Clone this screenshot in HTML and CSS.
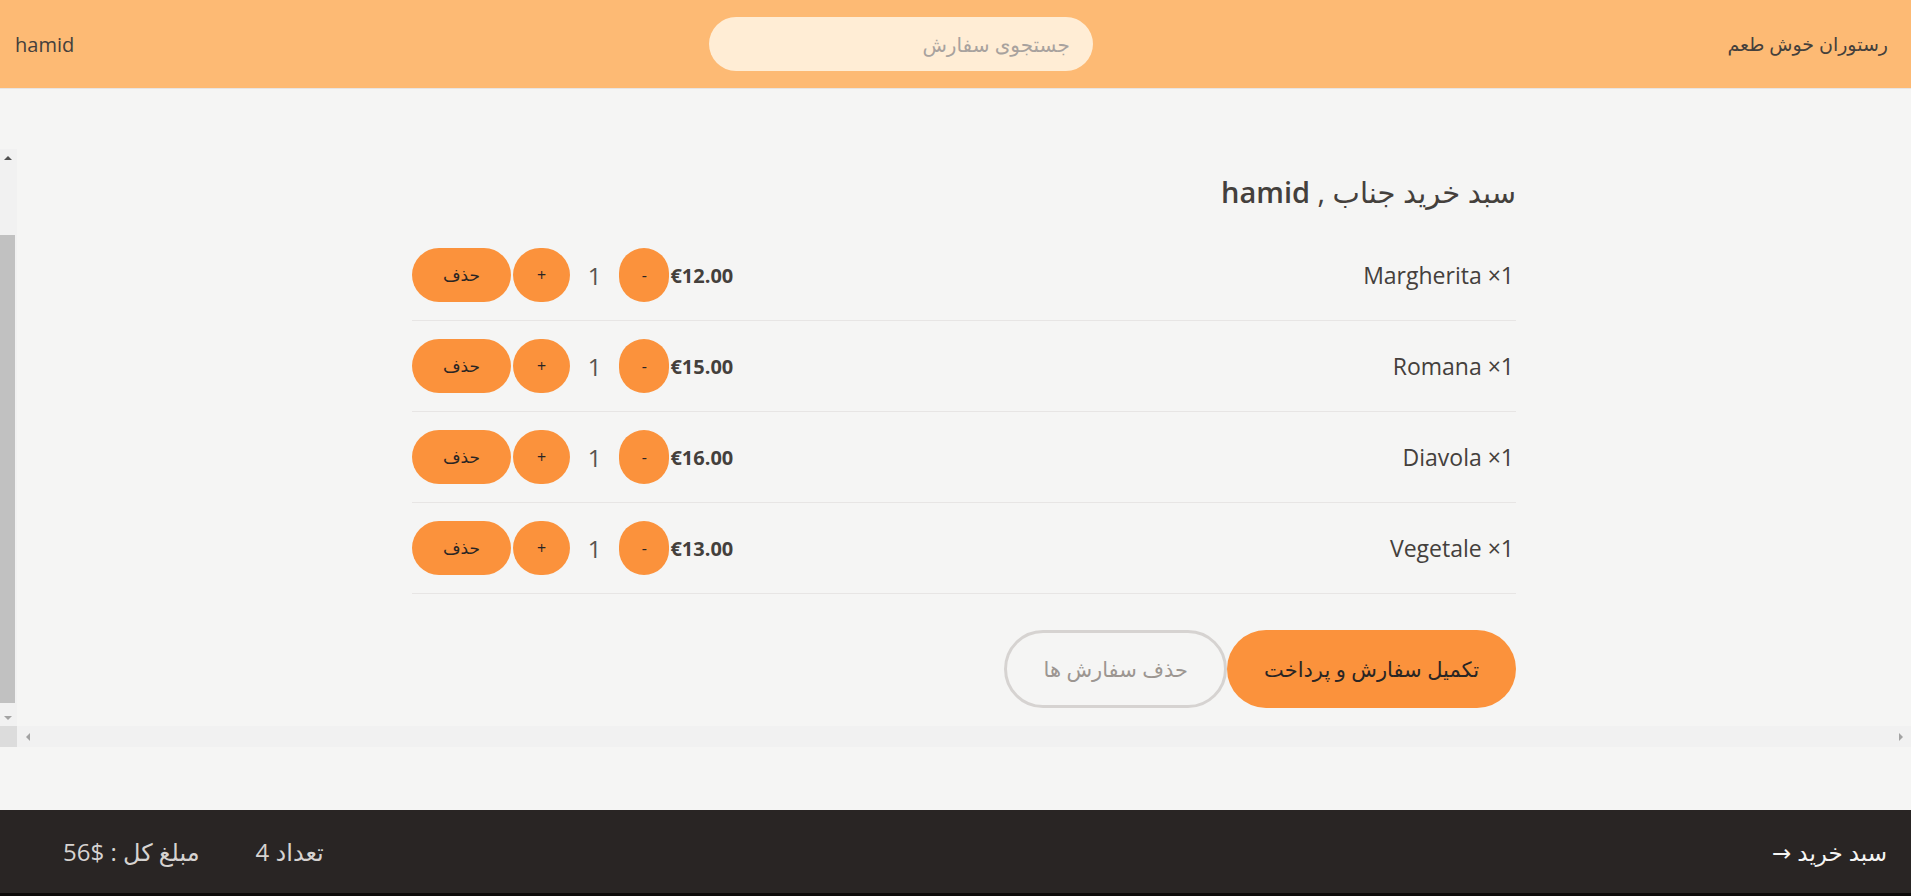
FILE: index.html
```html
<!DOCTYPE html>
<html lang="fa" dir="rtl">
<head>
<meta charset="utf-8">
<title>سبد خرید</title>
<link rel="stylesheet" href="styles.css">
</head>
<body>
<header class="topbar">
  <div class="brand">رستوران خوش طعم</div>
  <input class="search" type="text" placeholder="جستجوی سفارش">
  <div class="user">hamid</div>
</header>

<main class="page">
  <div class="cart-frame">
    <div class="cart-view">
      <section class="cart">
        <h1 class="cart-title">سبد خرید جناب , <span class="title-name">hamid</span></h1>

        <div class="item">
          <div class="item-name">Margherita ×1</div>
          <div class="item-controls">
            <span class="price">€12.00</span>
            <button class="pill step minus">-</button>
            <span class="qty">1</span>
            <button class="pill step plus">+</button>
            <button class="pill remove">حذف</button>
          </div>
        </div>

        <div class="item">
          <div class="item-name">Romana ×1</div>
          <div class="item-controls">
            <span class="price">€15.00</span>
            <button class="pill step minus">-</button>
            <span class="qty">1</span>
            <button class="pill step plus">+</button>
            <button class="pill remove">حذف</button>
          </div>
        </div>

        <div class="item">
          <div class="item-name">Diavola ×1</div>
          <div class="item-controls">
            <span class="price">€16.00</span>
            <button class="pill step minus">-</button>
            <span class="qty">1</span>
            <button class="pill step plus">+</button>
            <button class="pill remove">حذف</button>
          </div>
        </div>

        <div class="item">
          <div class="item-name">Vegetale ×1</div>
          <div class="item-controls">
            <span class="price">€13.00</span>
            <button class="pill step minus">-</button>
            <span class="qty">1</span>
            <button class="pill step plus">+</button>
            <button class="pill remove">حذف</button>
          </div>
        </div>

        <div class="actions">
          <button class="big-btn checkout">تکمیل سفارش و پرداخت</button>
          <button class="big-btn clear">حذف سفارش ها</button>
        </div>
      </section>
    </div>

    <div class="vbar">
      <div class="sb-btn"><span class="arrow up"></span></div>
      <div class="vtrack"><div class="vthumb"></div></div>
      <div class="sb-btn"><span class="arrow down"></span></div>
    </div>

    <div class="hbar">
      <div class="sb-btn hbtn"><span class="arrow left"></span></div>
      <div class="htrack"></div>
      <div class="sb-btn hbtn"><span class="arrow right"></span></div>
    </div>

    <div class="corner"></div>
  </div>
</main>

<footer class="bottombar">
  <div class="cart-link">سبد خرید →</div>
  <div class="stats">
    <span class="stat">تعداد 4</span>
    <span class="stat">مبلغ کل : $56</span>
  </div>
</footer>
</body>
</html>
```

FILE: styles.css
```css
* {
  box-sizing: border-box;
}

html, body {
  margin: 0;
  padding: 0;
}

body {
  height: 100vh;
  display: flex;
  flex-direction: column;
  direction: rtl;
  font-family: "Open Sans", "DejaVu Sans", sans-serif;
  background: #f5f5f4;
  color: #44403c;
  overflow: hidden;
}

/* ---------- header ---------- */
.topbar {
  height: 89px;
  flex-shrink: 0;
  background: #fdba74;
  border-bottom: 1px solid #e7e5e4;
  display: flex;
  align-items: center;
  justify-content: space-between;
  padding: 0 23px 0 15px;
}

.brand {
  font-size: 19px;
  color: #44403c;
}

.search {
  width: 384px;
  height: 54px;
  border: none;
  outline: none;
  border-radius: 9999px;
  background: #ffedd5;
  padding: 0 23px;
  font-family: "Open Sans", "DejaVu Sans", sans-serif;
  font-size: 20px;
  color: #44403c;
  direction: rtl;
}

.search::placeholder {
  color: #a8a29e;
}

.user {
  font-size: 20px;
  font-weight: 500;
  color: #44403c;
}

/* ---------- main ---------- */
.page {
  flex: 1;
  padding-top: 60px;
}

.cart-frame {
  display: grid;
  grid-template-columns: 1fr 17px;
  grid-template-rows: 577px 21px;
}

.cart-view {
  overflow: hidden;
}

.cart {
  width: 100%;
  max-width: 1152px;
  margin: 0 auto;
  padding: 22px 24px 18px;
}

.cart-title {
  margin: 0 0 17px;
  font-size: 29px;
  font-weight: 500;
  line-height: 42px;
  color: #44403c;
}

.title-name {
  font-weight: 600;
}

.item {
  display: flex;
  align-items: center;
  justify-content: space-between;
  padding: 18px 0;
  border-bottom: 1px solid #e7e5e4;
}

.item-name {
  font-size: 23px;
  color: #44403c;
  padding-right: 2px;
}

.item-controls {
  display: flex;
  align-items: center;
}

.price {
  font-size: 20px;
  font-weight: 700;
  color: #44403c;
  margin-left: 1px;
}

.pill {
  height: 54px;
  border: none;
  border-radius: 9999px;
  background: #fb923c;
  color: #292524;
  font-family: "Open Sans", "DejaVu Sans", sans-serif;
  font-size: 16px;
  line-height: 24px;
  padding: 0;
}

.step.minus {
  padding: 0 22.5px;
}

.step.plus {
  padding: 0 24px;
}

.qty {
  width: 49px;
  text-align: center;
  font-size: 24px;
  color: #57534e;
}

.remove {
  font-size: 17px;
  padding: 0 31px;
  margin-right: 2px;
}

.actions {
  display: flex;
  margin-top: 36px;
}

.big-btn {
  height: 78px;
  border-radius: 9999px;
  font-family: "Open Sans", "DejaVu Sans", sans-serif;
  font-size: 21px;
}

.checkout {
  background: #fb923c;
  border: none;
  color: #292524;
  padding: 0 37px;
}

.clear {
  background: transparent;
  border: 3px solid #d6d3d1;
  color: #9c9691;
  padding: 0 36px;
}

/* ---------- scrollbars (drawn) ---------- */
.vbar {
  display: flex;
  flex-direction: column;
  background: #f1f1f1;
}

.sb-btn {
  height: 17px;
  flex-shrink: 0;
  display: flex;
  align-items: center;
  justify-content: center;
  padding-right: 2px;
}

.vtrack {
  flex: 1;
  display: flex;
  flex-direction: column;
}

.vthumb {
  margin-top: 69px;
  margin-right: 2px;
  height: 468px;
  background: #c1c1c1;
}

.hbar {
  direction: ltr;
  display: flex;
  background: #f1f1f1;
}

.hbtn {
  width: 21px;
  height: 21px;
  padding-right: 0;
}

.htrack {
  flex: 1;
}

.corner {
  background: #dcdcdc;
}

.arrow {
  width: 0;
  height: 0;
  border-style: solid;
  border-color: transparent;
}

.arrow.up {
  border-width: 0 4px 4px 4px;
  border-bottom-color: #505050;
}

.arrow.down {
  border-width: 4px 4px 0 4px;
  border-top-color: #a3a3a3;
}

.arrow.left {
  border-width: 4px 4px 4px 0;
  border-right-color: #a3a3a3;
}

.arrow.right {
  border-width: 4px 0 4px 4px;
  border-left-color: #a3a3a3;
}

/* ---------- footer ---------- */
.bottombar {
  height: 86px;
  flex-shrink: 0;
  background: #292524;
  border-bottom: 3px solid #0c0a09;
  display: flex;
  align-items: center;
  justify-content: space-between;
  padding: 0 24px 0 63px;
  color: #e7e5e4;
}

.cart-link {
  color: #f5f5f4;
  font-size: 23px;
}

.stats {
  display: flex;
  gap: 56px;
}

.stat {
  color: #d6d3d1;
  font-size: 24px;
}
```
